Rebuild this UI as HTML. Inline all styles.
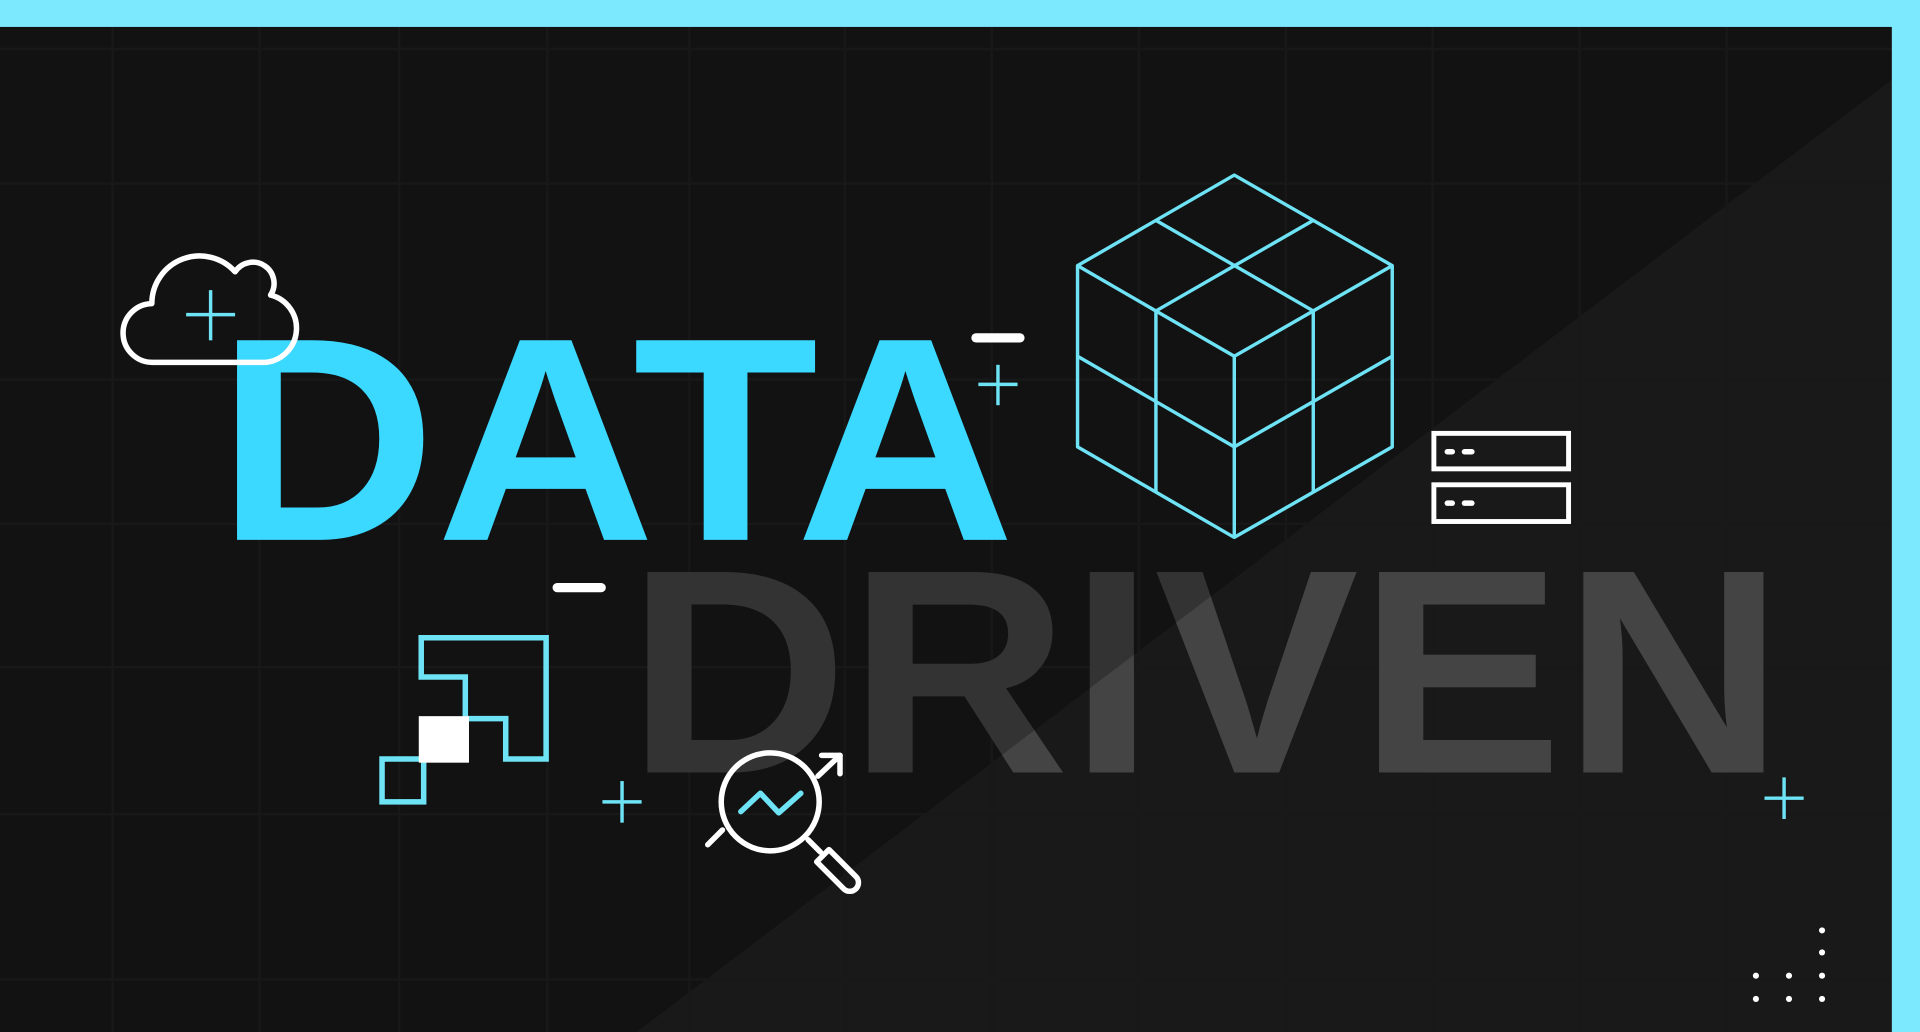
<!DOCTYPE html>
<html><head><meta charset="utf-8"><style>
html,body{margin:0;padding:0;background:#121212;overflow:hidden}
svg{display:block}
</style></head><body>
<svg width="1920" height="1032" viewBox="0 0 1568 843" preserveAspectRatio="none" xmlns="http://www.w3.org/2000/svg">
<defs>
<clipPath id="tri"><polygon points="520,843 1545,65 1545,843"/></clipPath>
</defs>
<rect width="1568" height="843" fill="#121212"/>
<polygon points="520,843 1545,65 1545,843" fill="#191919"/>
<g stroke="#181818" stroke-width="2">
<line x1="92" y1="22" x2="92" y2="843"/><line x1="212" y1="22" x2="212" y2="843"/>
<line x1="326" y1="22" x2="326" y2="843"/><line x1="447" y1="22" x2="447" y2="843"/>
<line x1="563" y1="22" x2="563" y2="843"/><line x1="690" y1="22" x2="690" y2="843"/>
<line x1="810" y1="22" x2="810" y2="843"/><line x1="930" y1="22" x2="930" y2="843"/>
<line x1="1050" y1="22" x2="1050" y2="843"/><line x1="1170" y1="22" x2="1170" y2="843"/>
<line x1="1290" y1="22" x2="1290" y2="843"/><line x1="1410" y1="22" x2="1410" y2="843"/>
<line x1="0" y1="40" x2="1545" y2="40"/><line x1="0" y1="150" x2="1545" y2="150"/>
<line x1="0" y1="310" x2="1545" y2="310"/><line x1="0" y1="428" x2="1545" y2="428"/>
<line x1="0" y1="545" x2="1545" y2="545"/><line x1="0" y1="665" x2="1545" y2="665"/>
<line x1="0" y1="800" x2="1545" y2="800"/>
</g>
<rect x="0" y="0" width="1568" height="22" fill="#7de9ff"/>
<rect x="1545" y="0" width="23" height="843" fill="#7de9ff"/>

<text x="177" y="441" font-family="Liberation Sans, sans-serif" font-weight="bold" font-size="237" fill="#3bd8ff" textLength="652" lengthAdjust="spacingAndGlyphs">DATA</text>
<text x="512" y="631" font-family="Liberation Sans, sans-serif" font-weight="bold" font-size="238" fill="#333333" textLength="945" lengthAdjust="spacingAndGlyphs">DRIVEN</text>
<text x="512" y="631" font-family="Liberation Sans, sans-serif" font-weight="bold" font-size="238" fill="#444444" textLength="945" lengthAdjust="spacingAndGlyphs" clip-path="url(#tri)">DRIVEN</text>

<g fill="none" stroke="#6ee3f5" stroke-width="2.8" stroke-linejoin="round">
<polygon points="1008,143 1137,217 1137,365 1008,439 880,365 880,217"/>
<polyline points="880,217 1008,291 1137,217"/>
<line x1="1008" y1="291" x2="1008" y2="439"/>
<line x1="944" y1="180" x2="1072.5" y2="254"/><line x1="1072.5" y1="180" x2="944" y2="254"/>
<line x1="944" y1="254" x2="944" y2="402"/><line x1="880" y1="291" x2="1008" y2="365"/>
<line x1="1072.5" y1="254" x2="1072.5" y2="402"/><line x1="1137" y1="291" x2="1008" y2="365"/>
</g>

<g fill="none" stroke="#fff" stroke-width="4">
<rect x="1171" y="354" width="110" height="29"/>
<rect x="1171" y="396" width="110" height="30"/>
</g>
<g stroke="#fff" stroke-width="4.5" stroke-linecap="round">
<line x1="1182" y1="369" x2="1186" y2="369"/><line x1="1196" y1="369" x2="1202" y2="369"/>
<line x1="1182" y1="411" x2="1186" y2="411"/><line x1="1196" y1="411" x2="1202" y2="411"/>
<line x1="797" y1="276" x2="833" y2="276" stroke-width="7.5"/>
<line x1="455" y1="480" x2="491" y2="480" stroke-width="7.5"/>
</g>

<g stroke="#6ee3f5" stroke-width="2.8">
<line x1="815" y1="298" x2="815" y2="331"/><line x1="799" y1="314" x2="831" y2="314"/>
<line x1="508" y1="638" x2="508" y2="672"/><line x1="492" y1="655" x2="524" y2="655"/>
<line x1="1457" y1="635" x2="1457" y2="669"/><line x1="1441" y1="652" x2="1473" y2="652"/>
<line x1="172" y1="237" x2="172" y2="278"/><line x1="152" y1="257" x2="192" y2="257"/>
</g>

<path d="M125,296 A24,24 0 0 1 124,248 A39,39 0 0 1 192,222 A16,16 0 0 1 221,241 A28,28 0 0 1 217,296 Z" fill="none" stroke="#fff" stroke-width="4.5" stroke-linejoin="round"/>

<polygon points="344,521 446,521 446,620 413,620 413,587 380,587 380,553 344,553" fill="none" stroke="#6ee3f5" stroke-width="4.5"/>
<rect x="312" y="620" width="34" height="35" fill="none" stroke="#6ee3f5" stroke-width="4.5"/>
<rect x="342" y="585" width="41" height="38" fill="#fff"/>

<g fill="none" stroke="#fff" stroke-width="4.5" stroke-linecap="round" stroke-linejoin="round">
<circle cx="629" cy="655" r="40"/>
<line x1="578" y1="690" x2="590" y2="678"/>
<line x1="668" y1="634" x2="686" y2="617"/>
<polyline points="671,617 686,617 686,632"/>
<line x1="660" y1="686" x2="670" y2="696"/>
<path d="M667,704 L677,694 L699,716 A7,7 0 0 1 689,726 Z"/>
</g>
<polyline points="605,663 621,648 636,664 654,648" fill="none" stroke="#6ee3f5" stroke-width="4.5" stroke-linecap="round" stroke-linejoin="round"/>

<g fill="#fff">
<circle cx="1488" cy="760" r="2.5"/><circle cx="1488" cy="778" r="2.5"/>
<circle cx="1434" cy="797" r="2.5"/><circle cx="1461" cy="797" r="2.5"/><circle cx="1488" cy="797" r="2.5"/>
<circle cx="1434" cy="816" r="2.5"/><circle cx="1461" cy="816" r="2.5"/><circle cx="1488" cy="816" r="2.5"/>
</g>
</svg>
</body></html>
